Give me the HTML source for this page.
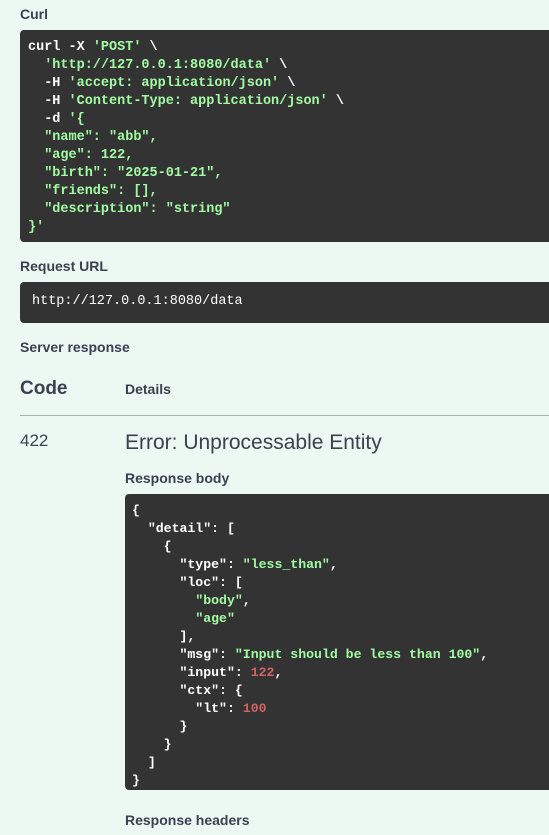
<!DOCTYPE html>
<html><head><meta charset="utf-8"><style>
body{margin:0;width:549px;height:835px;overflow:hidden;background:#ecf8f2;font-family:"Liberation Sans",sans-serif;color:#3b4151;position:relative}
.a{position:absolute;white-space:pre}
.h{font-weight:bold;font-size:14px}
.blk{position:absolute;background:#333;border-radius:4px}
pre{margin:0;font-family:"Liberation Mono",monospace;font-weight:bold;font-size:13.5px;line-height:18px;color:#fff;position:absolute}
.g{color:#a2fca2}.r{color:#d36363}
</style></head><body>
<div class="a h" style="left:20px;top:6px">Curl</div>
<div class="blk" style="left:20px;top:30px;width:560px;height:212px"></div>
<pre style="left:28px;top:39px">curl -X <span class="g">'POST'</span> \
  <span class="g">'http://127.0.0.1:8080/data'</span> \
  -H <span class="g">'accept: application/json'</span> \
  -H <span class="g">'Content-Type: application/json'</span> \
  -d <span class="g">'{
  "name": "abb",
  "age": 122,
  "birth": "2025-01-21",
  "friends": [],
  "description": "string"
}'</span></pre>
<div class="a h" style="left:20px;top:258px">Request URL</div>
<div class="blk" style="left:20px;top:282px;width:560px;height:41px"></div>
<div class="a" style="left:32px;top:294px;font-family:'Liberation Mono',monospace;font-size:13.5px;color:#fff">http://127.0.0.1:8080/data</div>
<div class="a h" style="left:20px;top:339px">Server response</div>
<div class="a" style="left:20px;top:378px;font-size:19px;font-weight:bold">Code</div>
<div class="a h" style="left:125px;top:381px">Details</div>
<div style="position:absolute;left:20px;top:415px;width:529px;height:1px;background:#aab3b0"></div>
<div class="a" style="left:20px;top:431px;font-size:17px">422</div>
<div class="a" style="left:125px;top:431px;font-size:21px">Error: Unprocessable Entity</div>
<div class="a h" style="left:125px;top:470px">Response body</div>
<div class="blk" style="left:125px;top:494px;width:450px;height:296px"></div>
<pre style="left:132px;top:502px;font-size:13.2px">{
  "detail": [
    {
      "type": <span class="g">"less_than"</span>,
      "loc": [
        <span class="g">"body"</span>,
        <span class="g">"age"</span>
      ],
      "msg": <span class="g">"Input should be less than 100"</span>,
      "input": <span class="r">122</span>,
      "ctx": {
        "lt": <span class="r">100</span>
      }
    }
  ]
}</pre>
<div class="a h" style="left:125px;top:812px">Response headers</div>
</body></html>
